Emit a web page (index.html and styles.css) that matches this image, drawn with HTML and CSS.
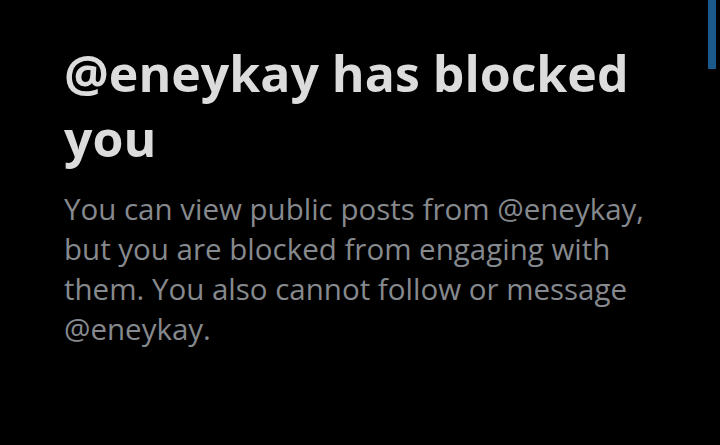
FILE: index.html
```html
<!DOCTYPE html>
<html lang="en">
<head>
    <meta charset="UTF-8">
    <meta name="viewport" content="width=device-width, initial-scale=1.0">
    <title>Blocked</title>
    <link rel="stylesheet" href="styles.css">
</head>
<body>
    <div class="blocked-screen">
        <div class="blocked-content">
            <h1 class="blocked-title">@eneykay has blocked you</h1>
            <p class="blocked-text">You can view public posts from @eneykay, but you are blocked from engaging with them. You also cannot follow or message @eneykay.</p>
        </div>
        <div class="scroll-thumb"></div>
    </div>
</body>
</html>
```

FILE: styles.css
```css
* {
    margin: 0;
    padding: 0;
    box-sizing: border-box;
}

body {
    background-color: #000;
    font-family: 'Open Sans', sans-serif;
    height: 100vh;
    overflow: hidden;
}

.blocked-screen {
    position: relative;
    height: 100%;
}

.blocked-content {
    padding: 41px 64px 0 64px;
    display: flex;
    flex-direction: column;
    gap: 18px;
}

.blocked-title {
    color: #dcdcdc;
    font-size: 50px;
    font-weight: 700;
    line-height: 65px;
}

.blocked-text {
    color: #86898d;
    font-size: 29.5px;
    font-weight: 400;
    line-height: 40px;
}

.scroll-thumb {
    position: absolute;
    top: 0;
    right: 4px;
    width: 8px;
    height: 69px;
    background-color: #1c5a8b;
}
```
